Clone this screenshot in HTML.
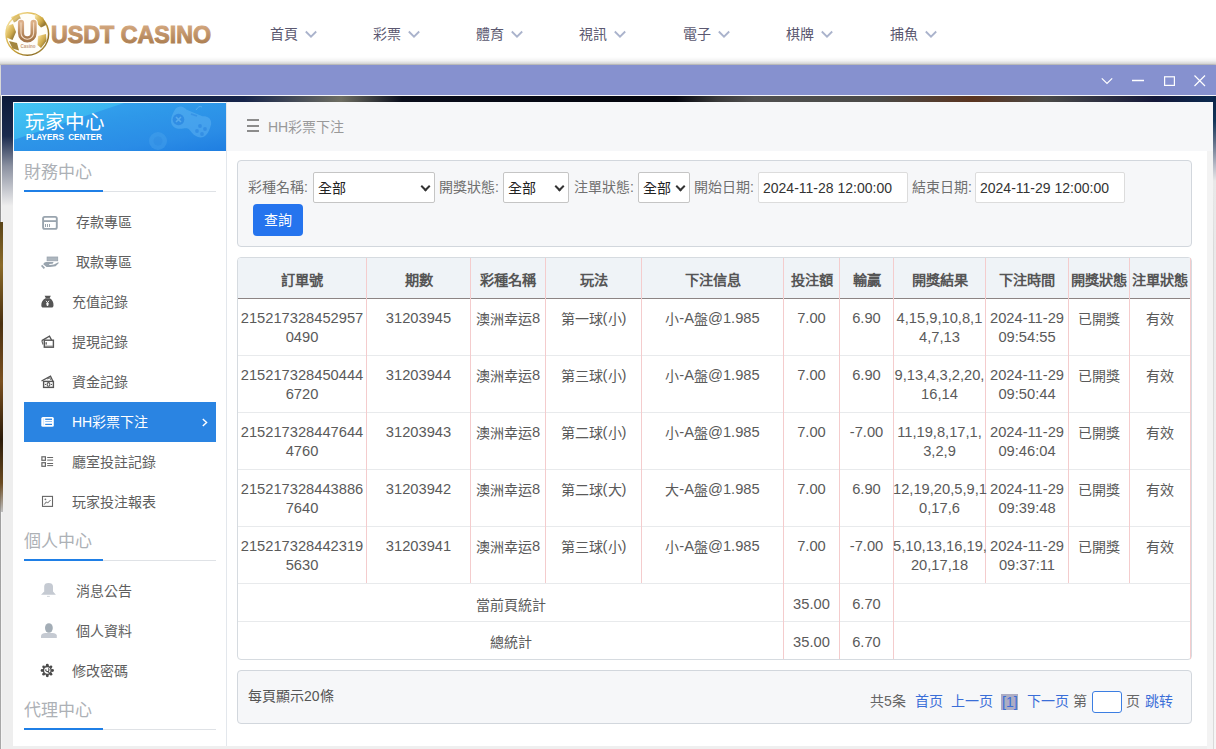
<!DOCTYPE html>
<html lang="zh-TW">
<head>
<meta charset="utf-8">
<style>
*{margin:0;padding:0;box-sizing:border-box}
html,body{width:1216px;height:749px;overflow:hidden;background:#fff;font-family:"Liberation Sans",sans-serif;color:#555}
.a{position:absolute}
.t{position:absolute;white-space:nowrap;line-height:1}
/* header */
#hdr{left:0;top:0;width:1216px;height:64px;background:#fff;box-shadow:0 1px 5px rgba(0,0,0,.18);z-index:2}
.nav{font-size:14px;color:#5b5870;top:27px}
.chev{position:absolute;width:8px;height:8px;border-right:1.6px solid #b3bbd3;border-bottom:1.6px solid #b3bbd3;transform:rotate(45deg)}
/* dialog */
#dlg{left:0;top:65px;width:1216px;height:684px;background:linear-gradient(#d8d8d8 0,#d8d8d8 30px,#8e8e8e 32px,#a8a8a8 684px);z-index:1}
#ttl{left:1px;top:65px;width:1215px;height:30px;background:#8691cf;z-index:3}
#frame{left:1px;top:96px;width:1215px;height:653px;background:#efefef;z-index:3;overflow:hidden}
/* sidebar */
#side{left:13px;top:102px;width:214px;height:644px;background:#fff;border-right:1px solid #e3e7ec;z-index:4}
#sidehd{left:13px;top:102px;width:213px;height:49px;border-top:1px solid #f4f8fc;border-left:1px solid #f4f8fc;background:linear-gradient(170deg,#36a8f0 0%,#2e98e9 40%,#2a8ce6 75%,#1f7ee1 100%);z-index:5;overflow:hidden}
.sec{font-size:17px;color:#adb1b6;left:24px}
.secl{position:absolute;left:24px;width:192px;height:1px;background:#dfe2e6;z-index:5}
.secb{position:absolute;left:24px;width:79px;height:2px;background:#1f7fe6;z-index:6}
.item{font-size:14px;color:#5e5e5e;z-index:6}
#main{left:227px;top:102px;width:980px;height:644px;background:#fff;z-index:4}
#crumb{left:227px;top:102px;width:986px;height:49px;background:#f6f7f9;z-index:5}
.box{position:absolute;background:#f6f7f9;border:1px solid #d2d7dd;border-radius:4px;z-index:5}
.lbl{font-size:14px;color:#707070;z-index:6}
.sel{position:absolute;height:31px;border:1px solid #c5c5c5;border-radius:2px;background:#fff;z-index:6}
.sel span{position:absolute;left:4px;top:8px;font-size:14px;color:#222;line-height:1}
.sel i{position:absolute;width:7px;height:7px;border-right:2px solid #333;border-bottom:2px solid #333;transform:rotate(45deg);top:10px}
.inp{position:absolute;height:31px;border:1px solid #dcdcdc;border-radius:2px;background:#fff;z-index:6}
.inp span{position:absolute;left:4px;top:8px;font-size:14px;color:#333;line-height:1}
.th{position:absolute;text-align:center;font-size:15px;font-weight:bold;color:#555;line-height:19px;z-index:7;white-space:nowrap}
.td{position:absolute;text-align:center;font-size:14.7px;color:#5a5a5a;line-height:19px;z-index:7;white-space:nowrap}
.pg{font-size:14px;z-index:7}
.c{font-size:14px;position:relative;top:1px}
.th .c{font-size:14.2px;top:0}
</style>
</head>
<body>
<!-- header -->
<div id="hdr" class="a">
  <svg class="a" style="left:0;top:0" width="220" height="64" viewBox="0 0 220 64">
    <defs>
      <linearGradient id="gold" x1="0" y1="0" x2="1" y2="1">
        <stop offset="0" stop-color="#fff3c0"/><stop offset=".3" stop-color="#e2c060"/><stop offset=".55" stop-color="#c9a23a"/><stop offset=".8" stop-color="#8a6a20"/><stop offset="1" stop-color="#e8d27a"/>
      </linearGradient>
      <linearGradient id="brz" x1="0" y1="0" x2="0" y2="1">
        <stop offset="0" stop-color="#dcb088"/><stop offset="1" stop-color="#a37548"/>
      </linearGradient>
    </defs>
    <circle cx="27.3" cy="34" r="21.3" fill="#fffef8" stroke="url(#gold)" stroke-width="1.5"/>
    <g fill="url(#gold)" opacity=".9">
      <path d="M34.5 14 L43 17.5 L46.5 25 L41 27.5 L35.5 22 Z"/>
      <path d="M6.5 26 L13 24 L16 32 L12.5 40 L6.5 37.5 Z"/>
      <path d="M9 41 L17 43 L19 50.5 L12.5 48.5 Z" fill="#9a7a2a"/>
      <path d="M38 36 L46 34 L46.5 41 L41 48 L37.5 45 Z"/>
      <path d="M11 17 L19 14 L21 19 L14 22.5 Z" opacity=".8"/>
    </g>
    <path d="M21 22.8 V33 A6.3 6.3 0 0 0 33.6 33 V22.8" fill="none" stroke="#fff" stroke-width="8.4" stroke-linecap="round"/>
    <path d="M21 22.8 V33 A6.3 6.3 0 0 0 33.6 33 V22.8" fill="none" stroke="url(#brz)" stroke-width="6.2" stroke-linecap="round"/>
    <path d="M21 22.8 V33 A6.3 6.3 0 0 0 33.6 33 V22.8" fill="none" stroke="#f3dcc4" stroke-width="1.1" stroke-linecap="round"/>
    <text x="28" y="47.5" font-size="4.5" text-anchor="middle" fill="#c49a78" font-family="Liberation Sans" font-weight="bold">Casino</text>
    <text x="51" y="43" font-size="24" font-weight="bold" font-family="Liberation Sans" fill="url(#brz)" stroke="url(#brz)" stroke-width="1" textLength="160" lengthAdjust="spacingAndGlyphs">USDT CASINO</text>
  </svg>
  <div class="t nav" style="left:270px">首頁</div><svg class="a" style="left:305px;top:30px" width="12" height="10"><path d="M0.8 1.5 L6 6.7 L11.2 1.5" fill="none" stroke="#aab3cc" stroke-width="1.8"/></svg>
  <div class="t nav" style="left:373px">彩票</div><svg class="a" style="left:408px;top:30px" width="12" height="10"><path d="M0.8 1.5 L6 6.7 L11.2 1.5" fill="none" stroke="#aab3cc" stroke-width="1.8"/></svg>
  <div class="t nav" style="left:476px">體育</div><svg class="a" style="left:511px;top:30px" width="12" height="10"><path d="M0.8 1.5 L6 6.7 L11.2 1.5" fill="none" stroke="#aab3cc" stroke-width="1.8"/></svg>
  <div class="t nav" style="left:579px">視訊</div><svg class="a" style="left:614px;top:30px" width="12" height="10"><path d="M0.8 1.5 L6 6.7 L11.2 1.5" fill="none" stroke="#aab3cc" stroke-width="1.8"/></svg>
  <div class="t nav" style="left:683px">電子</div><svg class="a" style="left:718px;top:30px" width="12" height="10"><path d="M0.8 1.5 L6 6.7 L11.2 1.5" fill="none" stroke="#aab3cc" stroke-width="1.8"/></svg>
  <div class="t nav" style="left:786px">棋牌</div><svg class="a" style="left:821px;top:30px" width="12" height="10"><path d="M0.8 1.5 L6 6.7 L11.2 1.5" fill="none" stroke="#aab3cc" stroke-width="1.8"/></svg>
  <div class="t nav" style="left:890px">捕魚</div><svg class="a" style="left:925px;top:30px" width="12" height="10"><path d="M0.8 1.5 L6 6.7 L11.2 1.5" fill="none" stroke="#aab3cc" stroke-width="1.8"/></svg>
</div>

<!-- dialog -->
<div class="a" style="left:0;top:57px;width:1216px;height:8px;background:linear-gradient(rgba(0,0,0,0) 0%,rgba(0,0,0,.05) 45%,rgba(0,0,0,.21) 100%);z-index:2"></div>
<div id="dlg" class="a"></div>
<div id="ttl" class="a">
  <svg class="a" style="left:0;top:0" width="1215" height="30">
    <path d="M1100.8 13.3 L1106 18.5 L1111.2 13.3" fill="none" stroke="#fff" stroke-width="1.2"/>
    <path d="M1131 15.5 H1143" stroke="#fff" stroke-width="1.5"/>
    <rect x="1163.6" y="11.8" width="9.8" height="8.6" fill="none" stroke="#fff" stroke-width="1.2"/>
    <path d="M1193.5 10.5 L1204 21 M1204 10.5 L1193.5 21" stroke="#fff" stroke-width="1.2"/>
  </svg>
</div>
<div class="a" style="left:1px;top:95px;width:1215px;height:1px;background:#f4f4fa;z-index:4"></div>
<div class="a" style="left:1px;top:95px;width:1px;height:654px;background:#f4f4f4;z-index:4"></div>
<div id="frame" class="a">
  <div class="a" style="left:0;top:0;width:1215px;height:6px;background:linear-gradient(90deg,#0d1a3a 0%,#16244a 20%,#6e6e62 28%,#0a0e1c 33%,#04060f 50%,#05070f 55.5%,#3a3a3a 59%,#505050 62%,#4a4a48 72%,#5a3420 80%,#4a4a48 86%,#14183a 95%,#0a2a50 100%)"></div>
  <div class="a" style="left:0;top:0;width:12px;height:653px;background:linear-gradient(#0c1a3a 0px,#1a2a4e 40px,#8a90a0 70px,#eeeeee 110px,#eeeeee 653px)"></div>
  
  <div class="a" style="left:1212px;top:0;width:4px;height:653px;background:linear-gradient(#0a2448 0px,#123458 25px,#5a6a84 45px,#b8bcc8 70px,#e8e8e8 85px,#f6f6f6 653px)"></div>
  <div class="a" style="left:1212px;top:90px;width:1px;height:563px;background:linear-gradient(rgba(210,210,210,0),#dadada 60px)"></div>
  <div class="a" style="left:1206px;top:6px;width:6px;height:647px;background:#f3f3f3"></div>
</div>

<div class="a" style="left:0;top:222px;width:3px;height:290px;background:linear-gradient(#5a4418 0%,#8a6a28 15%,#4a3010 35%,#7a5020 55%,#2a1a08 75%,#6a4a20 90%,rgba(160,160,160,.6) 100%);z-index:5"></div>
<!-- sidebar -->
<div id="side" class="a"></div>
<div id="sidehd" class="a">
  <svg class="a" style="left:-1px;top:-1px" width="213" height="49">
    <defs><linearGradient id="cy" x1="0" y1="0" x2="1" y2="1"><stop offset="0" stop-color="#48d0f6"/><stop offset="1" stop-color="#34aaee"/></linearGradient></defs>
    <path d="M0 0 H114 L0 38 Z" fill="url(#cy)" opacity=".75"/>
    <g transform="rotate(22 177 21)" opacity=".45">
      <path d="M158 14 C156 26 160 31 166 31 C171 31 174 27 177 27 C180 27 183 31 189 31 C195 31 199 26 197 14 C195 8 190 8 186 10 L169 10 C165 8 160 8 158 14 Z" fill="#67b8f4"/>
    </g>
    <circle cx="165.5" cy="17.5" r="5.8" fill="#2a86e0" opacity=".75"/>
    <path d="M163 15 L168 20 M168 15 L163 20" stroke="#5fb0f0" stroke-width="1.6" opacity=".8"/>
    <g fill="#2d88e2" opacity=".7"><circle cx="187" cy="24" r="1.9"/><circle cx="192" cy="27" r="1.9"/><circle cx="184" cy="29" r="1.9"/><circle cx="189" cy="32" r="1.9"/></g>
    <path d="M178 12 L184 14" stroke="#2d88e2" stroke-width="1.4" opacity=".6"/>
    <path d="M183 8 Q186 3 189 5" fill="none" stroke="#6ab8f4" stroke-width="1" opacity=".6"/>
    <circle cx="145" cy="39" r="9" fill="#5aaef0" opacity=".3"/>
    <circle cx="145" cy="39" r="4.5" fill="#2a86e0" opacity=".35"/>
  </svg>
  <div class="t" style="left:11px;top:10px;font-size:19.5px;color:#fff">玩家中心</div>
  <div class="t" style="left:12px;top:31px;font-size:8.2px;font-weight:bold;color:#fff;word-spacing:2px">PLAYERS CENTER</div>
</div>

<div class="t sec" style="top:164px;z-index:6">財務中心</div>
<div class="secl" style="top:191px"></div><div class="secb" style="top:190px"></div>

<div class="t item" style="left:76px;top:215px">存款專區</div>
<div class="t item" style="left:76px;top:255px">取款專區</div>
<div class="t item" style="left:72px;top:295px">充值記錄</div>
<div class="t item" style="left:72px;top:335px">提現記錄</div>
<div class="t item" style="left:72px;top:375px">資金記錄</div>
<div class="a" style="left:24px;top:402px;width:192px;height:40px;background:#2a84e2;z-index:5"></div>
<div class="t item" style="left:72px;top:415px;color:#fff">HH彩票下注</div>
<div class="t item" style="left:72px;top:455px">廳室投註記錄</div>
<div class="t item" style="left:72px;top:495px">玩家投注報表</div>

<div class="t sec" style="top:533px;z-index:6">個人中心</div>
<div class="secl" style="top:560px"></div><div class="secb" style="top:559px"></div>
<div class="t item" style="left:76px;top:584px">消息公告</div>
<div class="t item" style="left:76px;top:624px">個人資料</div>
<div class="t item" style="left:72px;top:664px">修改密碼</div>

<div class="t sec" style="top:702px;z-index:6">代理中心</div>
<div class="secl" style="top:729px"></div><div class="secb" style="top:728px"></div>

<!--ICONS-->
<svg class="a" style="left:38px;top:212px;z-index:7" width="24" height="24" viewBox="0 0 24 24">
 <rect x="5.1" y="4.9" width="13.7" height="12" rx="1.6" fill="none" stroke="#99a4ae" stroke-width="1.9"/>
 <path d="M5 9.1 H19" stroke="#99a4ae" stroke-width="1.8"/>
 <rect x="7" y="12" width="1" height="3" fill="#99a4ae"/><rect x="9" y="12" width="1" height="3" fill="#99a4ae"/><rect x="11" y="12" width="1" height="3" fill="#99a4ae"/>
</svg>
<svg class="a" style="left:38px;top:252px;z-index:7" width="24" height="24" viewBox="0 0 24 24">
 <rect x="9.1" y="5" width="10.6" height="3.8" fill="#adb6be" stroke="#99a4ae" stroke-width=".8"/>
 <path d="M5.2 12.2 C6 10.8 7 10.2 8.2 10.1 L15.6 10.1 L14.6 11.7 L11 12 L11.6 12.9 L16 12.6 L20.3 10.2 L20.8 11.1 L17.6 14.3 L12 15 L8.6 14.9 Z" fill="#99a4ae"/>
 <path d="M3.6 13.4 L6.4 16.4" stroke="#99a4ae" stroke-width="1.7"/>
</svg>
<svg class="a" style="left:36px;top:290px;z-index:7" width="24" height="24" viewBox="0 0 24 24">
 <path d="M8.6 5.8 H14.8 L13.6 8.3 H9.9 Z" fill="#555"/>
 <path d="M9.5 8.3 H13.8 C16.5 9.6 17.6 12.5 17.5 15.2 C17.5 16.8 16.8 17.6 15.5 17.6 H7.3 C6 17.6 5.3 16.8 5.3 15.2 C5.3 12.5 6.6 9.6 9.5 8.3 Z" fill="#555"/>
 <path d="M10 10.8 L11.5 12.8 L13 10.8 M11.5 12.8 V16 M10.2 13.6 H12.8 M10.2 14.8 H12.8" fill="none" stroke="#fff" stroke-width=".9"/>
</svg>
<svg class="a" style="left:36px;top:330px;z-index:7" width="24" height="24" viewBox="0 0 24 24">
 <path d="M5.8 10.6 L13.5 6.2 L15.6 10.1" fill="none" stroke="#555" stroke-width="1.3"/>
 <path d="M5.8 10.6 L7 14.5" fill="none" stroke="#666" stroke-width="1.1"/>
 <rect x="8.3" y="10.2" width="9.1" height="7" fill="none" stroke="#555" stroke-width="1.4"/>
 <rect x="9" y="15.6" width="8" height="1.3" fill="#888"/>
 <rect x="9.4" y="12.2" width="1.6" height="2.4" fill="#777"/>
</svg>
<svg class="a" style="left:36px;top:370px;z-index:7" width="24" height="24" viewBox="0 0 24 24">
 <path d="M5.5 11 L14.5 6.2 L16.8 11" fill="none" stroke="#555" stroke-width="1.3"/>
 <path d="M11 9 L13.8 7.8 L14.6 9.8" fill="none" stroke="#666" stroke-width="1"/>
 <rect x="7.6" y="11.4" width="9.8" height="6" fill="none" stroke="#555" stroke-width="1.4"/>
 <ellipse cx="12.5" cy="14.4" rx="1.4" ry="1.8" fill="none" stroke="#555" stroke-width="1.1"/>
 <circle cx="9.5" cy="14.4" r=".6" fill="#555"/><circle cx="15.5" cy="14.4" r=".6" fill="#555"/>
</svg>
<svg class="a" style="left:36px;top:410px;z-index:7" width="24" height="24" viewBox="0 0 24 24">
 <rect x="5.3" y="6.9" width="12.5" height="9.8" rx="1.5" fill="#fff"/>
 <rect x="9.2" y="8.6" width="6.8" height="1.3" fill="#2a84e2"/>
 <rect x="9.2" y="11.1" width="6.8" height=".8" fill="#7fb4ee"/>
 <rect x="9.2" y="13.8" width="6.8" height="1.2" fill="#2a84e2"/>
 <rect x="7" y="8.4" width="1.2" height="6.8" fill="#d8e8fa"/>
</svg>
<svg class="a" style="left:36px;top:450px;z-index:7" width="24" height="24" viewBox="0 0 24 24">
 <rect x="5.9" y="6.8" width="3.5" height="3.5" fill="none" stroke="#666" stroke-width="1.2"/>
 <rect x="5.9" y="12.7" width="3.5" height="3.6" fill="none" stroke="#666" stroke-width="1.2"/>
 <path d="M11.2 7.5 H17.1 M11.2 10.1 H17.1 M11.2 13.5 H17.1 M11.2 15.6 H17.1" stroke="#666" stroke-width="1"/>
</svg>
<svg class="a" style="left:36px;top:490px;z-index:7" width="24" height="24" viewBox="0 0 24 24">
 <rect x="6.5" y="6.4" width="10" height="10" fill="none" stroke="#666" stroke-width="1.1"/>
 <path d="M8.2 14.6 L10.4 11.8 L11.5 13.1 L14.6 10" fill="none" stroke="#666" stroke-width="1"/>
 <circle cx="9.4" cy="9.3" r=".9" fill="#777"/>
</svg>
<svg class="a" style="left:36px;top:579px;z-index:7" width="24" height="24" viewBox="0 0 24 24">
 <path d="M8.2 15.7 V7.5 C8.2 5 9.8 4 12.5 4 C15.3 4 17 5 17 7.5 V12.5 L19.9 15.7 Z M5 15.7 L8.2 12.5 V15.7 Z" fill="#c5cad2"/>
 <rect x="11" y="16.9" width="2.8" height=".8" fill="#c5cad2"/>
</svg>
<svg class="a" style="left:36px;top:619px;z-index:7" width="24" height="24" viewBox="0 0 24 24">
 <ellipse cx="12.9" cy="9" rx="3.9" ry="4.8" fill="#a3adb6"/>
 <path d="M5 18.9 V16.4 C5.5 15 7 14.3 9.5 14.1 H16.5 C19 14.3 20.5 15 20.8 16.4 V18.9 Z" fill="#c5cad2"/>
</svg>
<svg class="a" style="left:36px;top:659px;z-index:7" width="24" height="24" viewBox="0 0 24 24">
 <g fill="#4a4a4a">
  <circle cx="11.3" cy="6.3" r="1.45"/><circle cx="11.3" cy="16.7" r="1.45"/><circle cx="6.1" cy="11.5" r="1.45"/><circle cx="16.5" cy="11.5" r="1.45"/>
  <circle cx="7.6" cy="7.8" r="1.35"/><circle cx="15" cy="7.8" r="1.35"/><circle cx="7.6" cy="15.2" r="1.35"/><circle cx="15" cy="15.2" r="1.35"/>
 </g>
 <circle cx="11.3" cy="11.5" r="3.9" fill="#fff" stroke="#4a4a4a" stroke-width="1.5"/>
 <path d="M10 10.2 A1.6 1.6 0 1 0 12.2 9.6 M11.8 12.4 L14.2 14.8" fill="none" stroke="#4a4a4a" stroke-width="1.1"/>
</svg>
<svg class="a" style="left:200px;top:416px;z-index:7" width="10" height="12" viewBox="0 0 10 12">
 <path d="M2.8 3 L6.6 6.5 L2.8 10" fill="none" stroke="#fff" stroke-width="1.4"/>
</svg>
<div class="a" style="left:247px;top:119px;width:12px;height:2px;background:#8c8c8c;z-index:6"></div>
<div class="a" style="left:247px;top:125px;width:12px;height:2px;background:#8c8c8c;z-index:6"></div>
<div class="a" style="left:247px;top:130px;width:12px;height:2px;background:#8c8c8c;z-index:6"></div>
<!--/ICONS-->
<!-- main -->
<div id="main" class="a"></div>
<div id="crumb" class="a"></div>
<div class="t" style="left:268px;top:120px;font-size:14px;color:#999;z-index:6">HH彩票下注</div>

<div class="box" style="left:237px;top:160px;width:955px;height:87px"></div>
<div class="t lbl" style="left:248px;top:180px">彩種名稱:</div>
<div class="sel" style="left:313px;top:172px;width:122px"><span>全部</span><i style="left:108px"></i></div>
<div class="t lbl" style="left:439px;top:180px">開獎狀態:</div>
<div class="sel" style="left:503px;top:172px;width:66px"><span>全部</span><i style="left:52px"></i></div>
<div class="t lbl" style="left:574px;top:180px">注單狀態:</div>
<div class="sel" style="left:638px;top:172px;width:52px"><span>全部</span><i style="left:38px"></i></div>
<div class="t lbl" style="left:694px;top:180px">開始日期:</div>
<div class="inp" style="left:758px;top:172px;width:150px"><span>2024-11-28 12:00:00</span></div>
<div class="t lbl" style="left:912px;top:180px">結束日期:</div>
<div class="inp" style="left:975px;top:172px;width:150px"><span>2024-11-29 12:00:00</span></div>
<div class="a" style="left:253px;top:204px;width:50px;height:32px;background:#2574ee;border-radius:4px;z-index:6"></div>
<div class="t" style="left:264px;top:213px;font-size:14px;color:#fff;z-index:7">查詢</div>

<!--TABLE-->
<div class="a" style="left:237px;top:257px;width:955px;height:403px;background:#fff;border:1px solid #d6dbe0;border-radius:4px;z-index:5"></div>
<div class="a" style="left:238px;top:258px;width:953px;height:40px;background:#eff3f7;border-radius:3px 3px 0 0;z-index:5"></div>
<div class="a" style="left:238px;top:298px;width:953px;height:1px;background:#8c8484;z-index:6"></div>
<div class="a" style="left:238px;top:355px;width:953px;height:1px;background:#e8eaec;z-index:6"></div>
<div class="a" style="left:238px;top:412px;width:953px;height:1px;background:#e8eaec;z-index:6"></div>
<div class="a" style="left:238px;top:469px;width:953px;height:1px;background:#e8eaec;z-index:6"></div>
<div class="a" style="left:238px;top:526px;width:953px;height:1px;background:#e8eaec;z-index:6"></div>
<div class="a" style="left:238px;top:583px;width:953px;height:1px;background:#e8eaec;z-index:6"></div>
<div class="a" style="left:238px;top:621px;width:953px;height:1px;background:#e8eaec;z-index:6"></div>
<div class="a" style="left:366px;top:258px;width:1px;height:325px;background:#f4cccd;z-index:6"></div>
<div class="a" style="left:470px;top:258px;width:1px;height:325px;background:#f4cccd;z-index:6"></div>
<div class="a" style="left:545px;top:258px;width:1px;height:325px;background:#f4cccd;z-index:6"></div>
<div class="a" style="left:641px;top:258px;width:1px;height:325px;background:#f4cccd;z-index:6"></div>
<div class="a" style="left:783px;top:258px;width:1px;height:401px;background:#f4cccd;z-index:6"></div>
<div class="a" style="left:839px;top:258px;width:1px;height:401px;background:#f4cccd;z-index:6"></div>
<div class="a" style="left:893px;top:258px;width:1px;height:401px;background:#f4cccd;z-index:6"></div>
<div class="a" style="left:985px;top:258px;width:1px;height:325px;background:#f4cccd;z-index:6"></div>
<div class="a" style="left:1068px;top:258px;width:1px;height:325px;background:#f4cccd;z-index:6"></div>
<div class="a" style="left:1129px;top:258px;width:1px;height:325px;background:#f4cccd;z-index:6"></div>
<div class="a" style="left:1190px;top:258px;width:1px;height:401px;background:#f4cccd;z-index:6"></div>
<div class="th" style="left:237px;top:270px;width:130px"><span class="c">訂單號</span></div>
<div class="th" style="left:366px;top:270px;width:105px"><span class="c">期數</span></div>
<div class="th" style="left:470px;top:270px;width:76px"><span class="c">彩種名稱</span></div>
<div class="th" style="left:545px;top:270px;width:97px"><span class="c">玩法</span></div>
<div class="th" style="left:641px;top:270px;width:143px"><span class="c">下注信息</span></div>
<div class="th" style="left:783px;top:270px;width:57px"><span class="c">投注額</span></div>
<div class="th" style="left:839px;top:270px;width:55px"><span class="c">輸贏</span></div>
<div class="th" style="left:893px;top:270px;width:93px"><span class="c">開獎結果</span></div>
<div class="th" style="left:985px;top:270px;width:84px"><span class="c">下注時間</span></div>
<div class="th" style="left:1068px;top:270px;width:62px"><span class="c">開獎狀態</span></div>
<div class="th" style="left:1129px;top:270px;width:62px"><span class="c">注單狀態</span></div>
<div class="td" style="left:237px;top:309px;width:130px">215217328452957<br>0490</div>
<div class="td" style="left:366px;top:309px;width:105px">31203945</div>
<div class="td" style="left:470px;top:309px;width:76px"><span class="c">澳洲幸运</span>8</div>
<div class="td" style="left:545px;top:309px;width:97px"><span class="c">第一球</span>(<span class="c">小</span>)</div>
<div class="td" style="left:641px;top:309px;width:143px"><span class="c">小</span>-A<span class="c">盤</span>@1.985</div>
<div class="td" style="left:783px;top:309px;width:57px">7.00</div>
<div class="td" style="left:839px;top:309px;width:55px">6.90</div>
<div class="td" style="left:893px;top:309px;width:93px">4,15,9,10,8,1<br>4,7,13</div>
<div class="td" style="left:985px;top:309px;width:84px">2024-11-29<br>09:54:55</div>
<div class="td" style="left:1068px;top:309px;width:62px"><span class="c">已開獎</span></div>
<div class="td" style="left:1129px;top:309px;width:62px"><span class="c">有效</span></div>
<div class="td" style="left:237px;top:366px;width:130px">215217328450444<br>6720</div>
<div class="td" style="left:366px;top:366px;width:105px">31203944</div>
<div class="td" style="left:470px;top:366px;width:76px"><span class="c">澳洲幸运</span>8</div>
<div class="td" style="left:545px;top:366px;width:97px"><span class="c">第三球</span>(<span class="c">小</span>)</div>
<div class="td" style="left:641px;top:366px;width:143px"><span class="c">小</span>-A<span class="c">盤</span>@1.985</div>
<div class="td" style="left:783px;top:366px;width:57px">7.00</div>
<div class="td" style="left:839px;top:366px;width:55px">6.90</div>
<div class="td" style="left:893px;top:366px;width:93px">9,13,4,3,2,20,<br>16,14</div>
<div class="td" style="left:985px;top:366px;width:84px">2024-11-29<br>09:50:44</div>
<div class="td" style="left:1068px;top:366px;width:62px"><span class="c">已開獎</span></div>
<div class="td" style="left:1129px;top:366px;width:62px"><span class="c">有效</span></div>
<div class="td" style="left:237px;top:423px;width:130px">215217328447644<br>4760</div>
<div class="td" style="left:366px;top:423px;width:105px">31203943</div>
<div class="td" style="left:470px;top:423px;width:76px"><span class="c">澳洲幸运</span>8</div>
<div class="td" style="left:545px;top:423px;width:97px"><span class="c">第二球</span>(<span class="c">小</span>)</div>
<div class="td" style="left:641px;top:423px;width:143px"><span class="c">小</span>-A<span class="c">盤</span>@1.985</div>
<div class="td" style="left:783px;top:423px;width:57px">7.00</div>
<div class="td" style="left:839px;top:423px;width:55px">-7.00</div>
<div class="td" style="left:893px;top:423px;width:93px">11,19,8,17,1,<br>3,2,9</div>
<div class="td" style="left:985px;top:423px;width:84px">2024-11-29<br>09:46:04</div>
<div class="td" style="left:1068px;top:423px;width:62px"><span class="c">已開獎</span></div>
<div class="td" style="left:1129px;top:423px;width:62px"><span class="c">有效</span></div>
<div class="td" style="left:237px;top:480px;width:130px">215217328443886<br>7640</div>
<div class="td" style="left:366px;top:480px;width:105px">31203942</div>
<div class="td" style="left:470px;top:480px;width:76px"><span class="c">澳洲幸运</span>8</div>
<div class="td" style="left:545px;top:480px;width:97px"><span class="c">第二球</span>(<span class="c">大</span>)</div>
<div class="td" style="left:641px;top:480px;width:143px"><span class="c">大</span>-A<span class="c">盤</span>@1.985</div>
<div class="td" style="left:783px;top:480px;width:57px">7.00</div>
<div class="td" style="left:839px;top:480px;width:55px">6.90</div>
<div class="td" style="left:893px;top:480px;width:93px">12,19,20,5,9,1<br>0,17,6</div>
<div class="td" style="left:985px;top:480px;width:84px">2024-11-29<br>09:39:48</div>
<div class="td" style="left:1068px;top:480px;width:62px"><span class="c">已開獎</span></div>
<div class="td" style="left:1129px;top:480px;width:62px"><span class="c">有效</span></div>
<div class="td" style="left:237px;top:537px;width:130px">215217328442319<br>5630</div>
<div class="td" style="left:366px;top:537px;width:105px">31203941</div>
<div class="td" style="left:470px;top:537px;width:76px"><span class="c">澳洲幸运</span>8</div>
<div class="td" style="left:545px;top:537px;width:97px"><span class="c">第三球</span>(<span class="c">小</span>)</div>
<div class="td" style="left:641px;top:537px;width:143px"><span class="c">小</span>-A<span class="c">盤</span>@1.985</div>
<div class="td" style="left:783px;top:537px;width:57px">7.00</div>
<div class="td" style="left:839px;top:537px;width:55px">-7.00</div>
<div class="td" style="left:893px;top:537px;width:93px">5,10,13,16,19,<br>20,17,18</div>
<div class="td" style="left:985px;top:537px;width:84px">2024-11-29<br>09:37:11</div>
<div class="td" style="left:1068px;top:537px;width:62px"><span class="c">已開獎</span></div>
<div class="td" style="left:1129px;top:537px;width:62px"><span class="c">有效</span></div>
<div class="td" style="left:237px;top:595px;width:547px"><span class="c">當前頁統計</span></div>
<div class="td" style="left:783px;top:595px;width:57px">35.00</div>
<div class="td" style="left:839px;top:595px;width:55px">6.70</div>
<div class="td" style="left:237px;top:632px;width:547px"><span class="c">總統計</span></div>
<div class="td" style="left:783px;top:633px;width:57px">35.00</div>
<div class="td" style="left:839px;top:633px;width:55px">6.70</div>
<!--/TABLE-->
<div class="box" style="left:237px;top:670px;width:955px;height:54px"></div>
<div class="t pg" style="left:248px;top:689px;color:#555">每頁顯示20條</div>
<div class="t pg" style="left:870px;top:694px;color:#666">共5条</div>
<div class="t pg" style="left:915px;top:694px;color:#3a6ed8">首页</div>
<div class="t pg" style="left:951px;top:694px;color:#3a6ed8">上一页</div>
<div class="a" style="left:1001px;top:694px;width:17px;height:16px;background:#adadc4;z-index:6"></div>
<div class="t pg" style="left:1002px;top:695px;color:#3a6ed8">[1]</div>
<div class="t pg" style="left:1027px;top:694px;color:#3a6ed8">下一页</div>
<div class="t pg" style="left:1073px;top:694px;color:#666">第</div>
<div class="a" style="left:1092px;top:691px;width:30px;height:22px;border:1px solid #3c7ee2;border-radius:3px;background:#fff;z-index:6"></div>
<div class="t pg" style="left:1126px;top:694px;color:#666">页</div>
<div class="t pg" style="left:1145px;top:694px;color:#3a6ed8">跳转</div>
</body>
</html>
